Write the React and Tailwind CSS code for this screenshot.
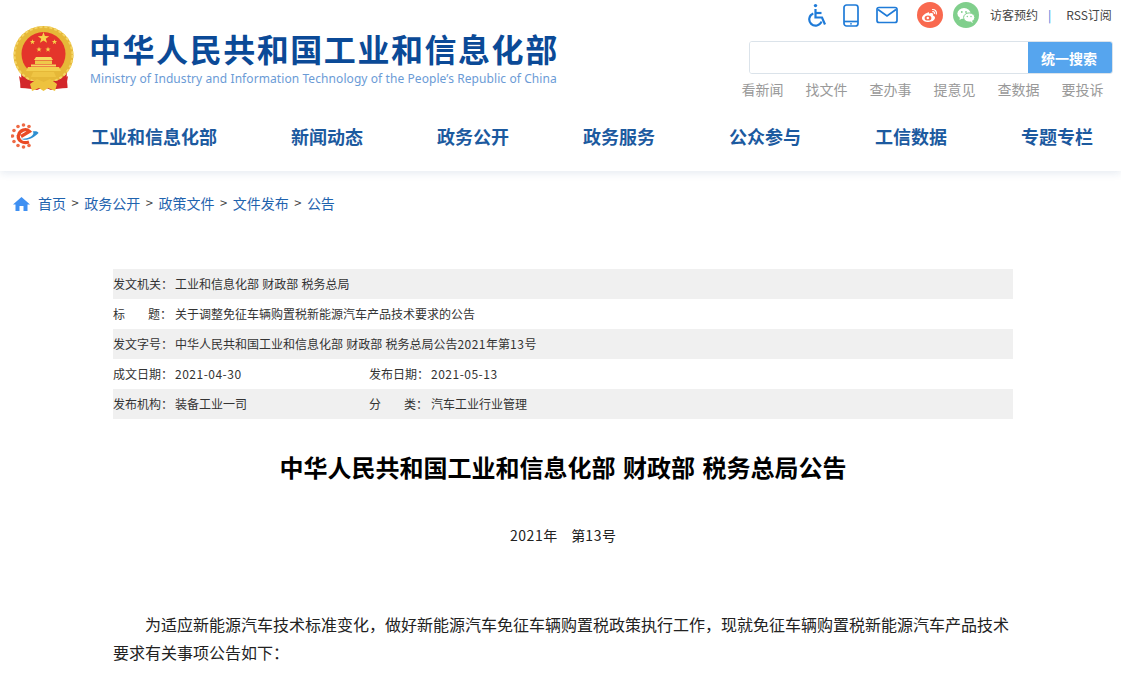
const CJK = { fontFamily: '"Noto Sans CJK SC", "Liberation Sans", sans-serif' };

function Emblem() {
  const star = (cx, cy, r) => {
    const pts = [];
    for (let i = 0; i < 10; i++) {
      const a = -Math.PI / 2 + (i * Math.PI) / 5;
      const rr = i % 2 === 0 ? r : r * 0.4;
      pts.push(`${cx + rr * Math.cos(a)},${cy + rr * Math.sin(a)}`);
    }
    return <polygon points={pts.join(' ')} fill="#f7d34a" />;
  };
  return (
    <svg width="62" height="66" viewBox="0 0 62 66" className="shrink-0">
      <path d="M8 44 C9 52 7 60 7.500 62 C14 62 20 63 24 64 L31 61 L38 64 C42 63 48 62 54.500 62 C55 60 53 52 54 44 Z" fill="#d3262b" />
      <ellipse cx="30.500" cy="29" rx="30" ry="29" fill="#e6b838" />
      <ellipse cx="30.500" cy="29" rx="29" ry="28" fill="none" stroke="#f4d566" strokeWidth="2" strokeDasharray="3 2" />
      <ellipse cx="30.500" cy="28" rx="22" ry="22" fill="#e4352b" />
      <path d="M10 44 H51 L46 51 H15 Z" fill="#e6b838" />
      {star(30.500, 12, 6)}
      {star(19.500, 16, 2.800)}
      {star(41.500, 16, 2.800)}
      {star(26, 23.500, 2.800)}
      {star(35, 23.500, 2.800)}
      <path d="M23 31 H38 L40 34 H21 Z" fill="#f6d860" />
      <path d="M22 34.500 H39 V38 H22 Z" fill="#efc84a" />
      <path d="M18 38.500 H43 V40.500 H18 Z" fill="#f6d860" />
      <path d="M15 41 H46 L48 45 H13 Z" fill="#f3cf4f" />
      <path d="M20 46 H41 L43 51 H18 Z" fill="#efc544" />
      <path d="M6 50 C10 54 15 55 21 55 L20 62 L8 62 Z" fill="#d3262b" />
      <path d="M55 50 C51 54 46 55 40 55 L41 62 L53 62 Z" fill="#d3262b" />
      <path d="M17 58 L24 53 L30.500 56 L37 53 L44 58 L42 65 L35 62 L30.500 65 L26 62 L19 65 Z" fill="#eec23e" />
    </svg>
  );
}

function Gear() {
  const teeth = [];
  for (let i = 0; i < 12; i++) {
    if (i === 0 || i === 11 || i === 1) continue;
    const a = (i * 30 * Math.PI) / 180;
    teeth.push(<circle key={i} cx={12.500 + 11 * Math.cos(a)} cy={13 + 11 * Math.sin(a)} r="1.800" fill="#ee6a45" />);
  }
  return (
    <svg width="28" height="26" viewBox="0 0 28 26" className="shrink-0">
      {teeth}
      <path d="M7.500 12.500 C8.500 7 15 5 18.500 8.500 L10 13.500" fill="none" stroke="#ea4a24" strokeWidth="3.200" />
      <path d="M7.200 12 C6.800 18 12 21 18 19" fill="none" stroke="#ea4a24" strokeWidth="3.200" />
      <path d="M10 15.500 C14 18.500 22 16 27.500 10 C27 8 24 8 21.500 8.500 C23.500 10 22 12.500 19 14 C16 15.500 13 16 10 15.500 Z" fill="#2f8ed0" />
    </svg>
  );
}

const NAV = ['工业和信息化部', '新闻动态', '政务公开', '政务服务', '公众参与', '工信数据', '专题专栏'];
const QUICK = ['看新闻', '找文件', '查办事', '提意见', '查数据', '要投诉'];
const CRUMBS = ['政务公开', '政策文件', '文件发布', '公告'];

function Row({ shaded, children }) {
  return <div className={`flex h-[30px] items-center text-xs text-[#333] ${shaded ? 'bg-[#f0f0f0]' : ''}`}>{children}</div>;
}

function Cell({ label, value, spaced, wide }) {
  return (
    <div className={`flex ${wide ? 'w-[256px] shrink-0' : ''}`}>
      <span className={`flex w-[62px] shrink-0 ${spaced ? 'justify-between pr-[3px]' : ''}`}>
        {spaced ? (
          <>
            <span>{label[0]}</span>
            <span>{label[1]}：</span>
          </>
        ) : (
          <span>{label}：</span>
        )}
      </span>
      <span className="[word-spacing:0.5px]">{value}</span>
    </div>
  );
}

export default function App() {
  return (
    <div className="h-[687px] w-[1121px] overflow-hidden bg-white" style={CJK}>
      <header className="h-[171px] bg-white shadow-[0_2px_8px_rgba(40,80,140,0.12)]">
        <div className="flex h-[107px] justify-between pl-[13px] pr-[8px]">
          <div className="flex items-start pt-[26px]">
            <Emblem />
            <div className="ml-[14px]">
              <div className="whitespace-nowrap text-[32px] font-bold leading-[44px] tracking-[1.55px] text-[#0b4a97]">中华人民共和国工业和信息化部</div>
              <div className="ml-[1px] mt-[1px] whitespace-nowrap text-[12px] leading-[16px] tracking-[0.08px] text-[#6b9bd6]" style={{ fontFamily: '"Noto Sans", sans-serif' }}>
                Ministry of Industry and Information Technology of the People’s Republic of China
              </div>
            </div>
          </div>
          <div className="flex w-[364px] flex-col items-end">
            <div className="flex h-[30px] w-full items-center">
              <svg width="22" height="24" viewBox="0 0 22 24" className="ml-[57px] shrink-0" fill="none" stroke="#1f7bd8" strokeWidth="2.200">
                <circle cx="9.500" cy="2.600" r="1.700" fill="#1f7bd8" stroke="none" />
                <path d="M9.500 6 V14.500 H16 L19 21.500" />
                <path d="M9.500 10 H15.500" />
                <path d="M7.300 10.500 A6.300 6.300 0 1 0 15.500 18.500" />
              </svg>
              <svg width="16" height="23" viewBox="0 0 16 23" className="ml-[15px] shrink-0" fill="none" stroke="#1f7bd8" strokeWidth="1.700">
                <rect x="1" y="1" width="14" height="21" rx="2.500" />
                <path d="M1 17.500 H15" />
                <circle cx="8" cy="19.800" r="0.900" fill="#1f7bd8" stroke="none" />
              </svg>
              <svg width="22" height="18" viewBox="0 0 22 18" className="ml-[17px] shrink-0" fill="none" stroke="#1f7bd8" strokeWidth="1.700">
                <rect x="1" y="1.500" width="20" height="15" rx="2" />
                <path d="M2 3.500 L11 10 L20 3.500" />
              </svg>
              <div className="ml-[19px] flex h-[26px] w-[26px] shrink-0 items-center justify-center rounded-full bg-[#f9694f]">
                <svg width="18" height="16" viewBox="0 0 18 16">
                  <path d="M7 5.500 C3.500 6.500 1 9 1 11 C1 13.500 4 15 7.500 15 C11 15 14 13 14 10.800 C14 9.300 12.600 9 12 8.600 C12.500 7 12 6 10.500 6 C9.500 6 8.500 6.400 8 6.600 C8.200 5.500 8 5 7 5.500 Z" fill="#fff" />
                  <ellipse cx="7" cy="11" rx="3.400" ry="2.600" fill="#f9694f" />
                  <circle cx="6.800" cy="11" r="1.200" fill="#fff" />
                  <path d="M11.500 2.500 C14 2.300 16 4.500 15.300 7 M11.800 4.700 C13 4.600 13.700 5.400 13.400 6.500" fill="none" stroke="#fff" strokeWidth="1.200" strokeLinecap="round" />
                </svg>
              </div>
              <div className="ml-[10px] flex h-[26px] w-[26px] shrink-0 items-center justify-center rounded-full bg-[#80cf8c]">
                <svg width="20" height="17" viewBox="0 0 20 17">
                  <ellipse cx="8" cy="6.500" rx="6.600" ry="5.400" fill="#fff" />
                  <path d="M4 10 L3.500 13 L7 11 Z" fill="#fff" />
                  <ellipse cx="13.200" cy="10.500" rx="5.600" ry="4.600" fill="#fff" stroke="#80cf8c" strokeWidth="1" />
                  <path d="M16 14 L17 16 L14 14.600 Z" fill="#fff" />
                  <circle cx="5.800" cy="5" r="0.900" fill="#80cf8c" />
                  <circle cx="10" cy="5" r="0.900" fill="#80cf8c" />
                  <circle cx="11.300" cy="9.500" r="0.700" fill="#80cf8c" />
                  <circle cx="15" cy="9.500" r="0.700" fill="#80cf8c" />
                </svg>
              </div>
              <span className="ml-[11px] whitespace-nowrap text-xs text-[#444]">访客预约</span>
              <span className="ml-[10px] text-xs text-[#1f7bd8]">|</span>
              <span className="ml-[15px] whitespace-nowrap text-xs text-[#444]">RSS订阅</span>
            </div>
            <div className="mt-[11px] flex h-[33px] w-[364px] overflow-hidden rounded-[3px] border border-[#dbe3ea]">
              <div className="flex-1 bg-white" />
              <div className="flex w-[84px] items-center justify-center bg-[#56a5ee] pr-[2px] text-sm font-bold text-white">统一搜索</div>
            </div>
            <div className="mt-[5px] flex h-[20px] items-center gap-[22px] pr-[9.500px] text-sm text-[#999]">
              {QUICK.map((q) => (
                <span key={q} className="whitespace-nowrap">{q}</span>
              ))}
            </div>
          </div>
        </div>
        <nav className="flex h-[58px] items-center pl-[11px]">
          <Gear />
          <ul className="ml-[52px] flex gap-[74px] text-[18px] font-bold text-[#1c5a9f]">
            {NAV.map((n) => (
              <li key={n} className="whitespace-nowrap">{n}</li>
            ))}
          </ul>
        </nav>
      </header>

      <div className="flex h-[64px] items-center pl-[13px] text-[#1f63ae]">
        <svg width="17" height="14" viewBox="0 0 17 14" className="mr-[8px] mt-[2px] shrink-0" fill="#3f90f2">
          <path d="M8.500 0 L17 7.500 H14.500 V14 H10.500 V9 H6.500 V14 H2.500 V7.500 H0 Z" />
        </svg>
        <span className="text-sm">首页</span>
        {CRUMBS.map((c) => (
          <span key={c} className="flex items-center text-sm">
            <span className="mx-[5.500px] text-[13px] text-[#444]">&gt;</span>
            {c}
          </span>
        ))}
      </div>

      <main className="mx-[113px] w-[900px] pt-[34px]">
        <div>
          <Row shaded><Cell label="发文机关" value="工业和信息化部 财政部 税务总局" /></Row>
          <Row><Cell spaced label={['标', '题']} value="关于调整免征车辆购置税新能源汽车产品技术要求的公告" /></Row>
          <Row shaded>
            <Cell
              label="发文字号"
              value={<>中华人民共和国工业和信息化部 财政部 税务总局公告<span className="tracking-[0.5px]">2021</span>年第<span className="tracking-[0.5px]">13</span>号</>}
            />
          </Row>
          <Row>
            <Cell wide label="成文日期" value={<span className="tracking-[0.5px]">2021-04-30</span>} />
            <Cell label="发布日期" value={<span className="tracking-[0.5px]">2021-05-13</span>} />
          </Row>
          <Row shaded><Cell wide label="发布机构" value="装备工业一司" /><Cell spaced label={['分', '类']} value="汽车工业行业管理" /></Row>
        </div>
        <h1 className="mt-[30px] text-center text-2xl font-bold leading-[36px] text-black [word-spacing:2px]">中华人民共和国工业和信息化部 财政部 税务总局公告</h1>
        <p className="mt-[40px] text-center text-sm leading-[20px] text-[#222]">
          <span className="tracking-[0.6px]">2021</span>年　第<span className="tracking-[0.6px]">13</span>号
        </p>
        <p className="mt-[65px] indent-8 text-base leading-[28px] text-[#222]">
          为适应新能源汽车技术标准变化，做好新能源汽车免征车辆购置税政策执行工作，现就免征车辆购置税新能源汽车产品技术要求有关事项公告如下：
        </p>
      </main>
    </div>
  );
}
